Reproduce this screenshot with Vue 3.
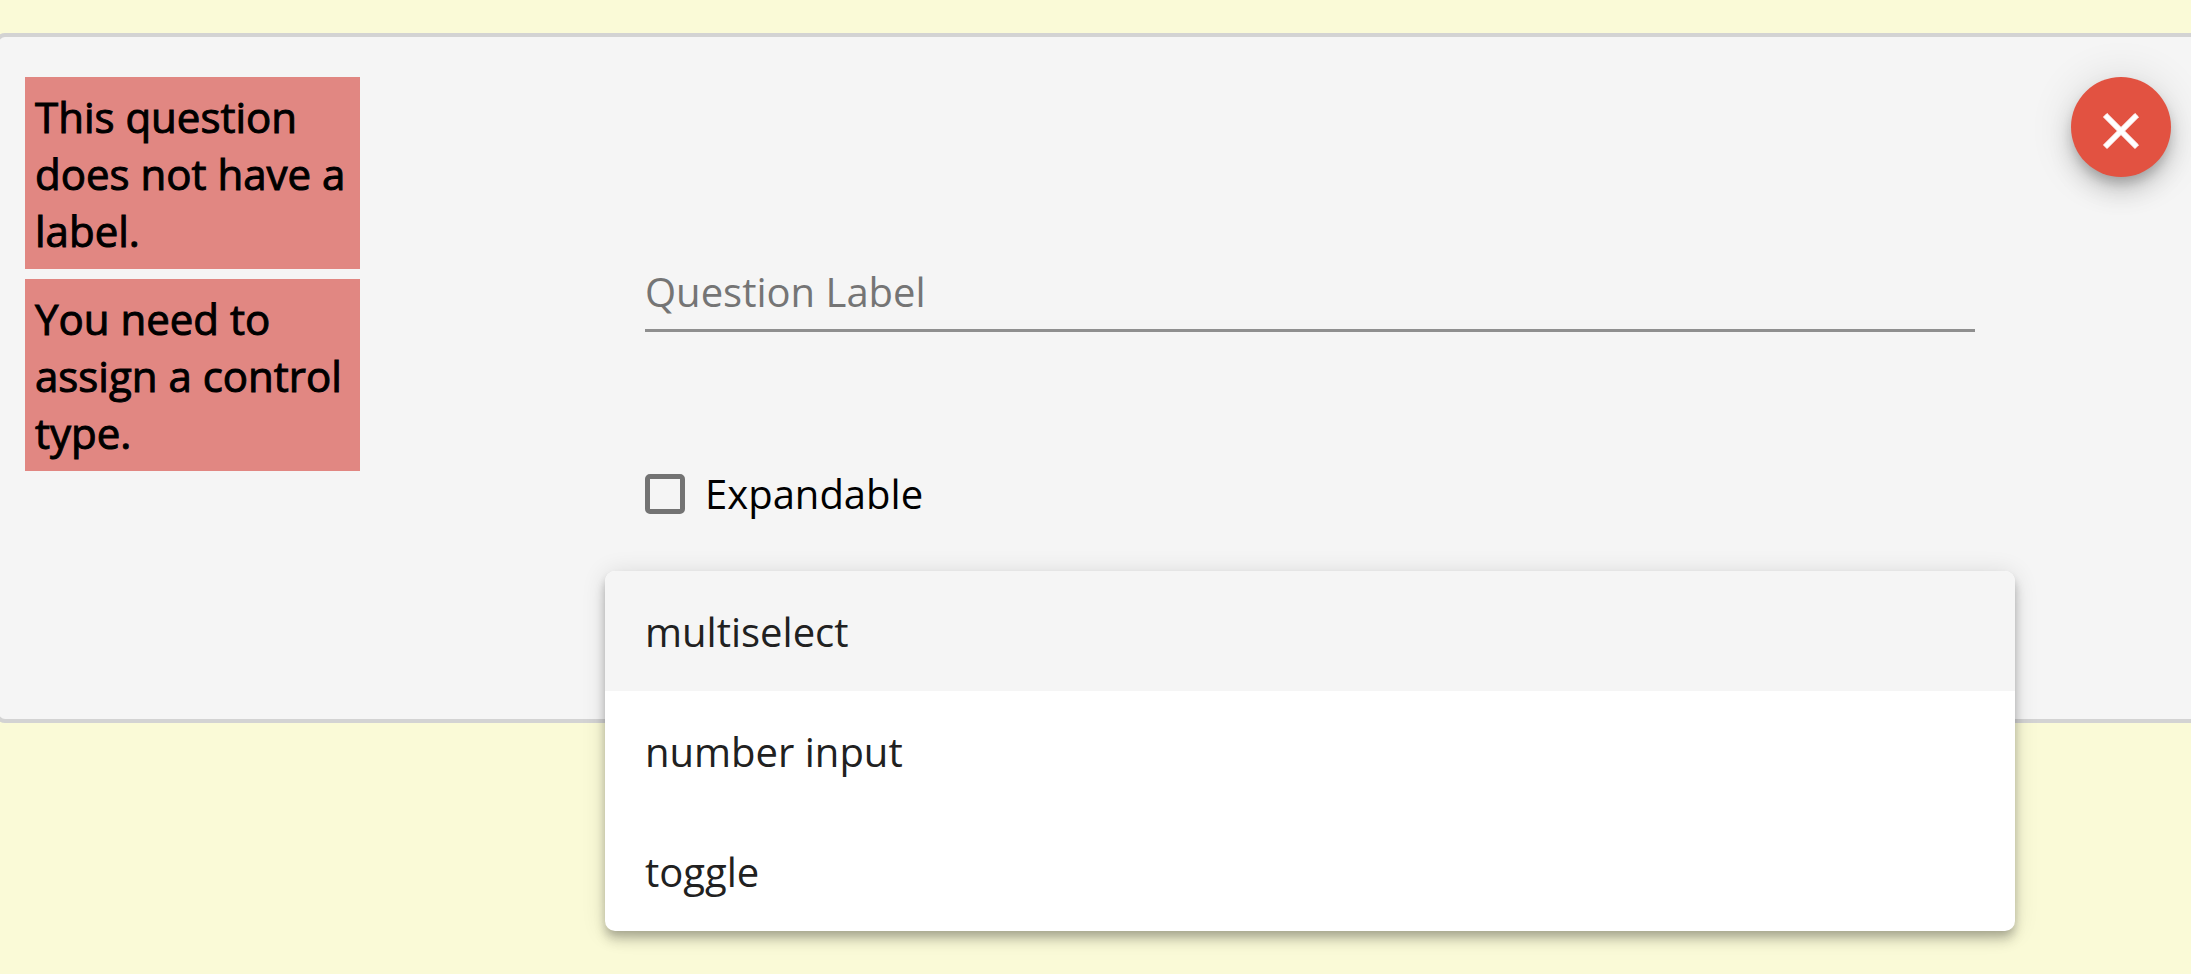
<script setup>
import { ref } from 'vue'

const errors = [
  'This question does not have a label.',
  'You need to assign a control type.',
]
const controlTypes = ['multiselect', 'number input', 'toggle']
const active = ref('multiselect')
const label = ref('')
const expandable = ref(false)
</script>

<template>
  <main class="page">
    <section class="card">
      <div class="errors">
        <p v-for="message in errors" :key="message" class="error">{{ message }}</p>
      </div>

      <form class="fields" @submit.prevent>
        <input
          v-model="label"
          class="text-input"
          type="text"
          placeholder="Question Label"
          aria-label="Question Label"
        />

        <label class="check">
          <input v-model="expandable" class="check-box" type="checkbox" />
          <span>Expandable</span>
        </label>

        <div class="control">
          <div class="menu" role="listbox" aria-label="Control type">
            <button
              v-for="type in controlTypes"
              :key="type"
              type="button"
              role="option"
              class="option"
              :class="{ active: type === active }"
              :aria-selected="type === active"
              @click="active = type"
            >
              {{ type }}
            </button>
          </div>
        </div>
      </form>

      <button class="remove" type="button" aria-label="Remove question">
        <svg viewBox="0 0 24 24" aria-hidden="true">
          <path
            d="M19 6.41L17.59 5 12 10.59 6.41 5 5 6.41 10.59 12 5 17.59 6.41 19 12 13.41 17.59 19 19 17.59 13.41 12z"
          />
        </svg>
      </button>
    </section>
  </main>
</template>

<style>
body {
  margin: 0;
  background: #fafad7;
}
</style>

<style scoped>
.page {
  box-sizing: border-box;
  min-height: 100vh;
  padding-top: 33px;
  overflow: hidden;
  font-family: 'Open Sans', 'Noto Sans', sans-serif;
  font-size: 40px;
  color: #000;
}

.card {
  display: grid;
  grid-template-columns: 335px minmax(0, 1fr) 100px;
  align-items: start;
  margin: 0 -20px 0 -5px;
  padding: 40px 36px 40px 26px;
  border: 4px solid #d3d3d3;
  border-radius: 10px;
  background: #f5f5f5;
}

.errors {
  display: grid;
  gap: 10px;
}

.error {
  margin: 0;
  padding: 11px 10px 10px;
  background: #e18782;
  font-size: 42px;
  line-height: 57px;
  -webkit-text-stroke: 1px #000;
}

.fields {
  display: flex;
  flex-direction: column;
  padding: 180px 96px 0 285px;
}

.text-input {
  box-sizing: border-box;
  width: 100%;
  height: 75px;
  padding: 0 0 3px;
  border: 0;
  border-bottom: 3px solid #8f8f8f;
  border-radius: 0;
  outline: 0;
  background: transparent;
  font: inherit;
  color: inherit;
}

.text-input::placeholder {
  color: #757575;
  opacity: 1;
}

.check {
  display: flex;
  align-items: center;
  align-self: flex-start;
  gap: 20px;
  margin-top: 132px;
  line-height: 60px;
}

.check-box {
  appearance: none;
  box-sizing: border-box;
  width: 40px;
  height: 40px;
  margin: 0;
  border: 5px solid #737373;
  border-radius: 5px;
}

.check-box:checked {
  background: #737373;
}

.control {
  position: relative;
  height: 155px;
}

.menu {
  position: absolute;
  top: 47px;
  right: -40px;
  left: -40px;
  overflow: hidden;
  border-radius: 10px;
  background: #fff;
  box-shadow:
    0 5px 10px -2px rgba(0, 0, 0, 0.2),
    0 10px 12px rgba(0, 0, 0, 0.14),
    0 2px 25px rgba(0, 0, 0, 0.12);
}

.option {
  display: block;
  width: 100%;
  height: 120px;
  padding: 0 40px;
  border: 0;
  background: transparent;
  font: inherit;
  text-align: left;
  color: #212121;
}

.option.active {
  background: #f5f5f5;
}

.remove {
  display: grid;
  place-items: center;
  width: 100px;
  height: 100px;
  padding: 8px 0 0;
  border: 0;
  border-radius: 50%;
  background: #e25241;
  box-shadow:
    0 8px 12px -2px rgba(0, 0, 0, 0.2),
    0 15px 25px rgba(0, 0, 0, 0.14),
    0 2px 45px rgba(0, 0, 0, 0.12);
}

.remove svg {
  width: 60px;
  height: 60px;
  fill: #fff;
  stroke: #fff;
  stroke-width: 0.4;
}
</style>
